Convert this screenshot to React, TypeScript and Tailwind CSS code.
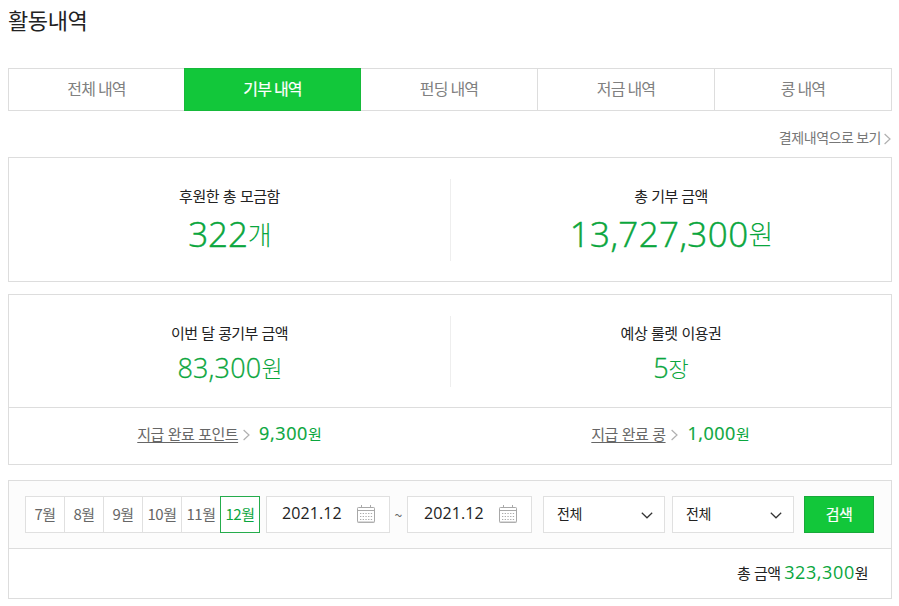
import clsx from 'clsx';
import type { ReactNode } from 'react';

const tabs = ['전체 내역', '기부 내역', '펀딩 내역', '저금 내역', '콩 내역'];
const months = ['7월', '8월', '9월', '10월', '11월', '12월'];

function Num({ children, className }: { children: ReactNode; className?: string }) {
  return <span className={clsx("font-['Open_Sans','Noto_Sans_CJK_KR',sans-serif]", className)}>{children}</span>;
}

// Currency or counter suffix, raised to sit level with the digits
function Unit({ children, className }: { children: ReactNode; className?: string }) {
  return <span className={clsx('relative', className)}>{children}</span>;
}

function ArrowRight({ className }: { className?: string }) {
  return (
    <svg viewBox="0 0 7 12" fill="none" stroke="#b0b0b0" strokeWidth="1.2" className={clsx('h-3 w-[7px] shrink-0', className)}>
      <path d="M.6 1 6 6 .6 11" />
    </svg>
  );
}

function CalendarIcon() {
  return (
    <svg viewBox="0 0 18 19" className="h-[19px] w-[18px] shrink-0" fill="none">
      <path d="M4.5 0v3M13.5 0v3" stroke="#aaa" />
      <rect x=".5" y="2.5" width="17" height="15" rx=".8" stroke="#a8a8a8" />
      <path d="M1 5.5h16" stroke="#aaa" />
      <path d="M1 17h16" stroke="#b5b5b5" />
      <path
        d="M3 8.5h13M3 11.5h13M3 14.5h13"
        stroke="#aaa"
        strokeWidth="1.2"
        strokeDasharray="1.3 1.4"
      />
    </svg>
  );
}

function DateField({ className }: { className: string }) {
  return (
    <button className={clsx('flex h-[37px] items-center border border-[#e0e0e0] bg-white text-[#222]', className)}>
      <Num className="w-[75px] pb-0.5 text-left text-[16px] leading-[33px] tracking-[0.1px]">2021.12</Num>
      <CalendarIcon />
    </button>
  );
}

function SelectField({ className }: { className?: string }) {
  return (
    <button
      className={clsx(
        'flex h-[37px] w-[122px] items-center justify-between border border-[#e0e0e0] bg-white pr-[11px] pl-[13px] text-[14px] tracking-[-0.3px] text-[#222]',
        className,
      )}
    >
      <span className="pb-0.5">전체</span>
      <svg viewBox="0 0 12 7" className="mt-0.5 h-[7px] w-3" fill="none" stroke="#333" strokeWidth="1.2">
        <path d="M.8.8 6 5.8 11.2.8" />
      </svg>
    </button>
  );
}

export default function App() {
  return (
    <div className="h-[606px] w-[899px] bg-white px-2 font-['Noto_Sans_CJK_KR',sans-serif] text-[#222]">
      <h1 className="h-[68px] text-[22px] leading-[38px] tracking-[-0.4px]">활동내역</h1>

      {/* Tabs */}
      <div className="flex h-[43px] w-[884px] border border-[#ddd]">
        {tabs.map((tab, i) => (
          <button
            key={tab}
            className={clsx(
              'pb-[3px] text-[16px] leading-[37px] tracking-[-0.8px]',
              i === 1
                ? '-my-px w-[177px] border border-[#16b93a] bg-[#12c73a] text-white [-webkit-text-stroke:0.2px_white]'
                : i === 0
                  ? 'w-[175px] text-[#808080]'
                  : i === 2
                    ? 'w-[176px] text-[#808080]'
                    : 'w-[177px] border-l border-[#ddd] text-[#808080]',
            )}
          >
            {tab}
          </button>
        ))}
      </div>

      <div className="flex h-[46px] w-[883px] items-center justify-end pt-2">
        <a className="pb-0.5 text-[14px] tracking-[-0.45px] text-[#777]">결제내역으로 보기</a>
        <ArrowRight className="mt-0.5 ml-[3px]" />
      </div>

      {/* Donation totals */}
      <div className="flex h-[125px] w-[884px] border border-[#ddd] text-center">
        <div className="w-[441px] pt-[26px]">
          <p className="text-[15px] leading-[23px] tracking-[-0.5px] [word-spacing:1px]">후원한 총 모금함</p>
          <p className="pl-px text-[26px] leading-[54px] font-light text-[#0aa63d]">
            <Num className="text-[35px] tracking-[-0.1px] [-webkit-text-stroke:0.5px_#0aa63d]">322</Num>
            <Unit className="-top-0.5">개</Unit>
          </p>
        </div>
        <div className="mt-[21px] h-[82px] w-px bg-[#eee]" />
        <div className="w-[440px] pt-[26px]">
          <p className="text-[15px] leading-[23px] tracking-[-0.6px] [word-spacing:1px]">총 기부 금액</p>
          <p className="pl-px text-[27px] leading-[54px] font-light text-[#0aa63d]">
            <Num className="text-[35px] tracking-[0.4px] [-webkit-text-stroke:0.5px_#0aa63d]">13,727,300</Num>
            <Unit className="-top-0.5">원</Unit>
          </p>
        </div>
      </div>

      {/* This month */}
      <div className="mt-3 h-[171px] w-[884px] border border-[#ddd]">
        <div className="flex h-[113px] border-b border-[#ddd] text-center">
          <div className="w-[441px] pt-[26px]">
            <p className="text-[15px] leading-[23px] tracking-[-0.6px] [word-spacing:1px]">이번 달 콩기부 금액</p>
            <p className="pl-px text-[23px] leading-[47px] font-light text-[#0aa63d]">
              <Num className="text-[27px] tracking-[0.2px] [-webkit-text-stroke:0.3px_#0aa63d]">83,300</Num>
              <Unit className="-top-px">원</Unit>
            </p>
          </div>
          <div className="mt-[21px] h-[71px] w-px bg-[#eee]" />
          <div className="w-[440px] pt-[26px]">
            <p className="text-[15px] leading-[23px] tracking-[-0.5px] [word-spacing:1px]">예상 룰렛 이용권</p>
            <p className="text-[22px] leading-[47px] font-light text-[#0aa63d]">
              <Num className="text-[27px] [-webkit-text-stroke:0.3px_#0aa63d]">5</Num>
              <Unit className="-top-px">장</Unit>
            </p>
          </div>
        </div>
        <div className="flex h-[56px]">
          <div className="flex w-[441px] items-center justify-center pb-1">
            <a className="text-[15px] tracking-[-0.5px] text-[#666] underline underline-offset-2 [word-spacing:1px]">
              지급 완료 포인트
            </a>
            <ArrowRight className="mt-0.5 ml-[5px]" />
            <span className="-mt-px ml-[9px] text-[15px] text-[#0aa63d]">
              <Num className="text-[18px] tracking-[0.6px] [-webkit-text-stroke:0.2px_#0aa63d]">9,300</Num>원
            </span>
          </div>
          <div className="flex w-[441px] items-center justify-center pb-1">
            <a className="text-[15px] tracking-[-0.5px] text-[#666] underline underline-offset-2 [word-spacing:1px]">
              지급 완료 콩
            </a>
            <ArrowRight className="mt-0.5 ml-[5px]" />
            <span className="-mt-px ml-[10px] text-[15px] text-[#0aa63d]">
              <Num className="text-[18px] tracking-[0.5px] [-webkit-text-stroke:0.2px_#0aa63d]">1,000</Num>원
            </span>
          </div>
        </div>
      </div>

      {/* Search filter */}
      <div className="mt-[15px] h-[119px] w-[884px] border border-[#ddd]">
        <div className="flex h-[68px] items-start border-b border-[#ddd] bg-[#fcfcfc] pt-[15px] pl-4">
          <div className="flex">
            {months.map((month, i) => (
              <button
                key={month}
                className={clsx(
                  'h-[37px] border bg-white text-[15px] tracking-[-0.5px]',
                  i === 5
                    ? 'w-10 border-[#25ac4c] text-[#0aa63d]'
                    : 'w-[39px] border-r-0 border-[#e0e0e0] text-[#666]',
                )}
              >
                {month}
              </button>
            ))}
          </div>
          <DateField className="ml-1.5 w-[124px] pl-[15px]" />
          <span className="w-[17px] text-center text-[14px] leading-[38px] text-[#666]">~</span>
          <DateField className="w-[125px] pl-4" />
          <SelectField className="ml-[11px]" />
          <SelectField className="ml-[7px]" />
          <button className="ml-[10px] h-[37px] w-[70px] border border-[#18a83a] bg-[#12c73a] pb-px text-[15px] tracking-[-0.5px] text-white [-webkit-text-stroke:0.2px_white]">
            검색
          </button>
        </div>
        <p className="pr-[23px] text-right text-[15px] leading-[46px] tracking-[-0.6px] [word-spacing:1px]">
          총 금액 <Num className="text-[18px] tracking-[0.6px] text-[#0aa63d]">323,300</Num>원
        </p>
      </div>
    </div>
  );
}
